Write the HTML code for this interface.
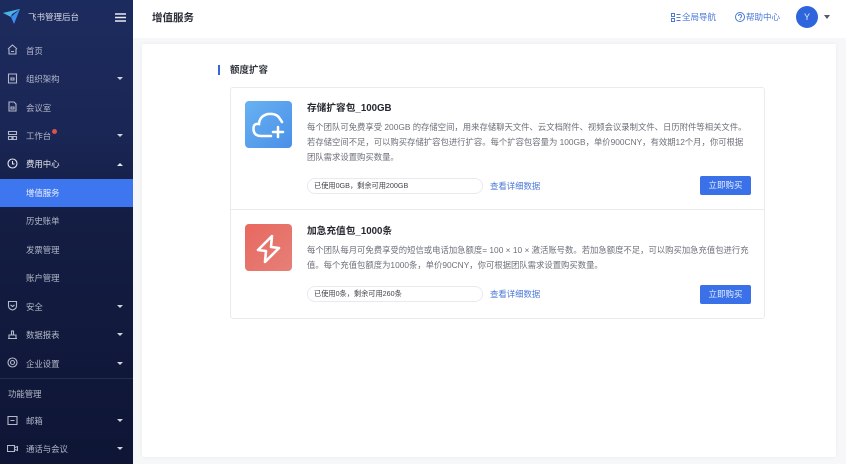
<!DOCTYPE html>
<html lang="zh">
<head>
<meta charset="utf-8">
<style>
*{box-sizing:border-box;margin:0;padding:0}
html,body{width:846px;height:464px;overflow:hidden;background:#f6f7f9;font-family:"Liberation Sans","Noto Sans CJK SC",sans-serif}
#w{position:absolute;left:0;top:0;width:846px;height:464px;filter:blur(.3px)}
.a{position:absolute;white-space:nowrap}
#side{position:absolute;left:0;top:0;width:133px;height:464px;background:linear-gradient(180deg,#1c2b5e 0,#1a2655 130px,#141d43 220px,#0e1535 464px)}
.m{position:absolute;left:26px;font-size:8.4px;line-height:12px;color:#b4b9c9;white-space:nowrap}
.c{position:absolute;left:117px;width:0;height:0;border-left:3px solid transparent;border-right:3px solid transparent;border-top:3px solid #d0d4df}
.ic{position:absolute;left:7px;width:11px;height:11px;fill:none;stroke:#b4b9c9;stroke-width:1.1}
.desc{font-size:8.36px;line-height:14.7px;color:#6b7078}
.pill{position:absolute;left:307px;width:176px;height:16px;border:1px solid #e8eaed;border-radius:8px;font-size:7.2px;line-height:14px;padding-left:6px;color:#40444c;white-space:nowrap;background:#fff}
.link{font-size:8.4px;line-height:12px;color:#4a78d8}
.btn{position:absolute;left:700px;width:51px;height:19px;border-radius:2px;background:#3a70e8;color:#e4ecfb;font-size:8.5px;line-height:19px;text-align:center}
.t{font-size:9.7px;line-height:14px;font-weight:bold;color:#24272e}
</style>
</head>
<body>
<div id="w">
<div id="side"></div>
<svg class="a" style="left:3px;top:8px" width="18" height="17" viewBox="0 0 18 17"><path d="M0 5 17 1 9 6Z" fill="#5ad0d8"/><path d="M17 1 11 16 8 9Z" fill="#3d8df0"/><path d="M0 5 8 9 9 6 17 1Z" fill="#49b3e8"/></svg>
<div class="a" style="left:28px;top:11px;font-size:8.5px;line-height:12px;color:#d5d9e4">飞书管理后台</div>
<svg class="a" style="left:115px;top:13px" width="11" height="9"><path d="M0 1h11M0 4.500h11M0 8h11" stroke="#e8ebf2" stroke-width="1.400"/></svg>

<svg class="ic" style="top:44px" viewBox="0 0 11 11"><path d="M1 5 5.500 1 10 5M2 5v5h7V5M4 7.500h3"/></svg>
<div class="m" style="top:45px">首页</div>
<svg class="ic" style="top:73px" viewBox="0 0 11 11"><path d="M1.500 1h8v9h-8zM4 5h3v2H4z"/></svg>
<div class="m" style="top:73px">组织架构</div><div class="c" style="top:77px"></div>
<svg class="ic" style="top:101px" viewBox="0 0 11 11"><path d="M2 1h5l2 2v7H2zM4 6h3v2H4z"/></svg>
<div class="m" style="top:102px">会议室</div>
<svg class="ic" style="top:130px" viewBox="0 0 11 11"><path d="M1.500 1.500h8v3h-8zM1.500 6.500h3.500v3h-3.500zM6 6.500h3.500v3H6z"/></svg>
<div class="m" style="top:130px">工作台</div><div class="a" style="left:52px;top:129px;width:5px;height:5px;border-radius:50%;background:#d9534f"></div><div class="c" style="top:134px"></div>
<svg class="ic" style="top:158px;stroke:#e4e7ef" viewBox="0 0 11 11"><circle cx="5.500" cy="5.500" r="4.500"/><path d="M5.500 3v3h2"/></svg>
<div class="m" style="top:158px;color:#e6e9f1">费用中心</div><div class="a" style="left:117px;top:163px;width:0;height:0;border-left:3px solid transparent;border-right:3px solid transparent;border-bottom:3px solid #e4e7ef"></div>
<div class="a" style="left:0;top:179px;width:133px;height:28px;background:#3e76f0"></div>
<div class="m" style="top:187px;color:#eef2fb">增值服务</div>
<div class="m" style="top:215px">历史账单</div>
<div class="m" style="top:244px">发票管理</div>
<div class="m" style="top:272px">账户管理</div>
<svg class="ic" style="top:300px" viewBox="0 0 11 11"><path d="M1.500 1.500h8v4.500q0 3-4 4-4-1-4-4zM3.500 5l2 1.500 2-1.500"/></svg>
<div class="m" style="top:301px">安全</div><div class="c" style="top:305px"></div>
<svg class="ic" style="top:329px" viewBox="0 0 11 11"><path d="M1 9.500h9M2 9.500V6h7v3.500M4.500 6V2h2v4"/></svg>
<div class="m" style="top:329px">数据报表</div><div class="c" style="top:333px"></div>
<svg class="ic" style="top:357px" viewBox="0 0 11 11"><circle cx="5.500" cy="5.500" r="4.500"/><circle cx="5.500" cy="5.500" r="2"/></svg>
<div class="m" style="top:358px">企业设置</div><div class="c" style="top:362px"></div>
<div class="a" style="left:0;top:378px;width:133px;height:1px;background:#252d4f"></div>
<div class="m" style="top:388px;left:8px">功能管理</div>
<svg class="ic" style="top:415px" viewBox="0 0 11 11"><path d="M1 1.500h9v8H1zM3.500 5.500h4"/></svg>
<div class="m" style="top:415px">邮箱</div><div class="c" style="top:419px"></div>
<svg class="ic" style="top:443px" viewBox="0 0 11 11"><path d="M.5 2.500h7v6h-7zM8 4.500l2.500-1v4L8 6.500"/></svg>
<div class="m" style="top:443px">通话与会议</div><div class="c" style="top:447px"></div>

<div class="a" style="left:133px;top:0;width:713px;height:38px;background:#fff"></div>
<div class="a" style="left:152px;top:11px;font-size:10.500px;line-height:15px;color:#2a2e36;font-weight:bold">增值服务</div>
<svg class="a" style="left:671px;top:13px" width="10" height="9" fill="none" stroke="#4a78d8"><path d="M.5.500h3v3h-3zM.5 5.500h3v3h-3zM5.500 1.500h4M5.500 4.500h4M5.500 7.500h4"/></svg>
<div class="a" style="left:682px;top:11px;font-size:8.500px;line-height:12px;color:#4a78d8">全局导航</div>
<svg class="a" style="left:735px;top:12px" width="10" height="10" fill="none" stroke="#4a78d8"><circle cx="5" cy="5" r="4.500"/><path d="M3.500 4q0-1.500 1.500-1.500T6.500 4 5 6M5 7v1"/></svg>
<div class="a" style="left:746px;top:11px;font-size:8.500px;line-height:12px;color:#4a78d8">帮助中心</div>
<div class="a" style="left:796px;top:6px;width:22px;height:22px;border-radius:50%;background:#2f65dc;color:#e8effc;font-size:9px;line-height:22px;text-align:center">Y</div>
<div class="a" style="left:824px;top:15px;width:0;height:0;border-left:3.500px solid transparent;border-right:3.500px solid transparent;border-top:4px solid #555a66"></div>

<div class="a" style="left:142px;top:44px;width:694px;height:413px;background:#fff;border-radius:2px;box-shadow:0 0 3px rgba(0,0,0,.06)"></div>
<div class="a" style="left:218px;top:65px;width:2px;height:10px;background:#3568d4"></div>
<div class="a" style="left:230px;top:64px;font-size:9.500px;line-height:13px;font-weight:bold;color:#33373f">额度扩容</div>

<div class="a" style="left:230px;top:87px;width:535px;height:232px;border:1px solid #e9ebee;border-radius:3px"></div>
<div class="a" style="left:230px;top:209px;width:535px;height:1px;background:#e9ebee"></div>

<div class="a" style="left:245px;top:101px;width:47px;height:47px;border-radius:4px;background:linear-gradient(135deg,#68b2f2,#4a8fe8)"></div>
<svg class="a" style="left:245px;top:101px" width="47" height="47" fill="none" stroke="#fff" stroke-width="2.500" stroke-linecap="round"><path d="M26 35H16q-7 0-7.500-6.500T14 23q.5-8 9-10 9-1 12 5l2 3"/><path d="M33 26v10M28 31h10"/></svg>
<div class="a t" style="left:307px;top:102px">存储扩容包_100GB</div>
<div class="a desc" style="left:307px;top:120.400px">每个团队可免费享受 200GB 的存储空间，用来存储聊天文件、云文档附件、视频会议录制文件、日历附件等相关文件。<br>若存储空间不足，可以购买存储扩容包进行扩容。每个扩容包容量为 100GB，单价900CNY，有效期12个月，你可根据<br>团队需求设置购买数量。</div>
<div class="pill" style="top:178px">已使用0GB，剩余可用200GB</div>
<div class="a link" style="left:490px;top:180px">查看详细数据</div>
<div class="btn" style="top:176px">立即购买</div>

<div class="a" style="left:245px;top:224px;width:47px;height:47px;border-radius:4px;background:linear-gradient(135deg,#e8685f,#e58078)"></div>
<svg class="a" style="left:245px;top:224px" width="47" height="47" fill="none" stroke="#fff" stroke-width="2.600" stroke-linejoin="round"><path d="M27 12 13 26l8 1-1 11 14-14-8-1z"/></svg>
<div class="a t" style="left:307px;top:225px">加急充值包_1000条</div>
<div class="a desc" style="left:307px;top:243px">每个团队每月可免费享受的短信或电话加急额度= 100 × 10 × 激活账号数。若加急额度不足，可以购买加急充值包进行充<br>值。每个充值包额度为1000条，单价90CNY，你可根据团队需求设置购买数量。</div>
<div class="pill" style="top:286px">已使用0条，剩余可用260条</div>
<div class="a link" style="left:490px;top:288px">查看详细数据</div>
<div class="btn" style="top:285px">立即购买</div>
</div>
</body>
</html>
